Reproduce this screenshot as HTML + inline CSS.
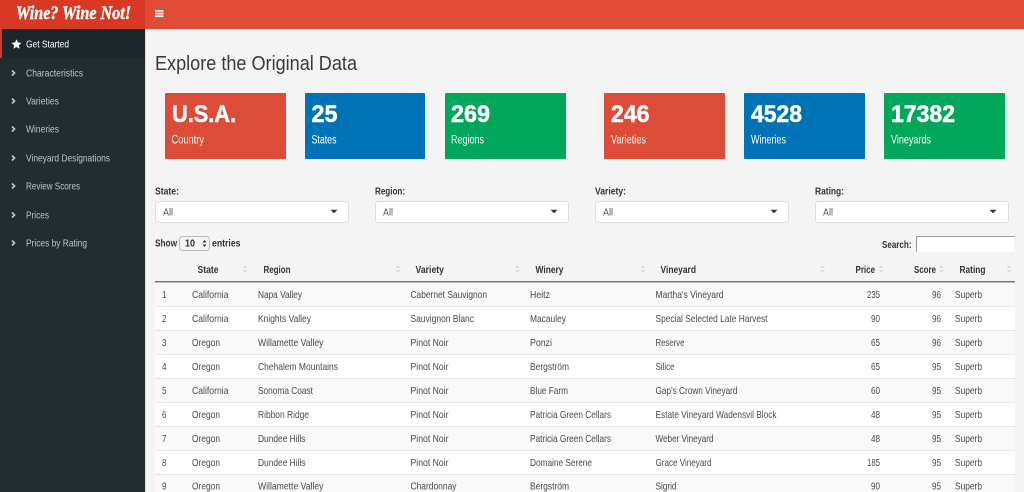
<!DOCTYPE html>
<html><head><meta charset="utf-8"><title>Wine? Wine Not!</title>
<style>
html,body{margin:0;padding:0;width:1024px;height:492px;overflow:hidden;background:#f4f4f4}
svg{display:block;font-family:"Liberation Sans",sans-serif;filter:blur(.3px)}
.n{font-size:10.5px;fill:#b8c7ce}
.b{font-size:10.5px;font-weight:bold;fill:#333}
.c{font-size:10.5px;fill:#484848}
.r{font-size:10.5px;fill:#484848;text-anchor:end}
.v{font-size:24px;font-weight:bold;fill:#fff;stroke:#fff;stroke-width:.5px}
.l{font-size:11.5px;fill:#fff}
.a{font-size:10.5px;fill:#555}
</style></head><body>
<svg width="1024" height="492" viewBox="0 0 1024 492" xmlns="http://www.w3.org/2000/svg">
<defs>
<g id="s"><path d="M-2.5 -1L0 -4L2.5 -1Z M-2.5 1L0 4L2.5 1Z" fill="#ddd"/></g>
<path id="ch" d="M-1.5 -2.5L1 0L-1.5 2.5" fill="none" stroke="#b8c7ce" stroke-width="1.7"/>
<path id="car" d="M-3.5 -1.7H3.5L0 1.9Z" fill="#333"/>
</defs>
<rect width="1024" height="492" fill="#f4f4f4"/>
<rect x="145" y="0" width="879" height="29" fill="#e04c38"/>
<rect x="0" y="0" width="145" height="29" fill="#d73925"/>
<text x="16" y="19" textLength="115" lengthAdjust="spacingAndGlyphs" font-family="Liberation Serif" font-size="19" font-weight="bold" font-style="italic" fill="#fff" stroke="#fff" stroke-width=".45">Wine? Wine Not!</text>
<rect x="155" y="10" width="8.5" height="1.7" fill="#fff"/><rect x="155" y="12.7" width="8.5" height="1.7" fill="#fff"/><rect x="155" y="15.4" width="8.5" height="1.7" fill="#fff"/>
<rect x="0" y="29" width="145" height="463" fill="#222d32"/>
<rect x="145" y="29" width="1" height="463" fill="#d8d8d8"/>
<rect x="0" y="29" width="145" height="29" fill="#1e282c"/>
<rect x="0" y="29" width="2" height="29" fill="#d73925"/>
<path d="M16.5 39.2L18 42.5L21.5 42.9L18.9 45.2L19.6 48.7L16.5 47L13.4 48.7L14.1 45.2L11.5 42.9L15 42.5Z" fill="#fff"/>
<text class="n" style="fill:#fff" x="26" y="47.5" textLength="43" lengthAdjust="spacingAndGlyphs">Get Started</text>
<use href="#ch" x="13.5" y="73"/><text class="n" x="26" y="76.5" textLength="57" lengthAdjust="spacingAndGlyphs">Characteristics</text>
<use href="#ch" x="13.5" y="101"/><text class="n" x="26" y="104.5" textLength="33" lengthAdjust="spacingAndGlyphs">Varieties</text>
<use href="#ch" x="13.5" y="129"/><text class="n" x="26" y="132.5" textLength="33" lengthAdjust="spacingAndGlyphs">Wineries</text>
<use href="#ch" x="13.5" y="158"/><text class="n" x="26" y="161.5" textLength="84" lengthAdjust="spacingAndGlyphs">Vineyard Designations</text>
<use href="#ch" x="13.5" y="186"/><text class="n" x="26" y="189.5" textLength="54" lengthAdjust="spacingAndGlyphs">Review Scores</text>
<use href="#ch" x="13.5" y="215"/><text class="n" x="26" y="218.5" textLength="23" lengthAdjust="spacingAndGlyphs">Prices</text>
<use href="#ch" x="13.5" y="243"/><text class="n" x="26" y="246.5" textLength="61" lengthAdjust="spacingAndGlyphs">Prices by Rating</text>

<text x="155" y="70" font-size="20" fill="#3a3a3a" textLength="202" lengthAdjust="spacingAndGlyphs">Explore the Original Data</text>

<rect x="165" y="93" width="121" height="66" rx="1" fill="#dd4b39"/>
<rect x="305" y="93" width="120" height="66" rx="1" fill="#0073b7"/>
<rect x="445" y="93" width="121" height="66" rx="1" fill="#00a65a"/>
<rect x="604" y="93" width="121" height="66" rx="1" fill="#dd4b39"/>
<rect x="744" y="93" width="121" height="66" rx="1" fill="#0073b7"/>
<rect x="884" y="93" width="121" height="66" rx="1" fill="#00a65a"/>
<text class="v" x="172" y="122" textLength="64" lengthAdjust="spacingAndGlyphs">U.S.A.</text><text class="l" x="171.5" y="143.5" textLength="32.5" lengthAdjust="spacingAndGlyphs">Country</text>
<text class="v" x="311.5" y="122" textLength="26" lengthAdjust="spacingAndGlyphs">25</text><text class="l" x="311.5" y="143.5" textLength="25" lengthAdjust="spacingAndGlyphs">States</text>
<text class="v" x="451" y="122" textLength="39" lengthAdjust="spacingAndGlyphs">269</text><text class="l" x="451" y="143.5" textLength="33" lengthAdjust="spacingAndGlyphs">Regions</text>
<text class="v" x="611" y="122" textLength="38.5" lengthAdjust="spacingAndGlyphs">246</text><text class="l" x="611" y="143.5" textLength="35" lengthAdjust="spacingAndGlyphs">Varieties</text>
<text class="v" x="751" y="122" textLength="51" lengthAdjust="spacingAndGlyphs">4528</text><text class="l" x="751" y="143.5" textLength="35" lengthAdjust="spacingAndGlyphs">Wineries</text>
<text class="v" x="891" y="122" textLength="64" lengthAdjust="spacingAndGlyphs">17382</text><text class="l" x="891" y="143.5" textLength="40" lengthAdjust="spacingAndGlyphs">Vineyards</text>

<text class="b" x="155" y="194.5" textLength="24" lengthAdjust="spacingAndGlyphs">State:</text>
<text class="b" x="375" y="194.5" textLength="30" lengthAdjust="spacingAndGlyphs">Region:</text>
<text class="b" x="595" y="194.5" textLength="31" lengthAdjust="spacingAndGlyphs">Variety:</text>
<text class="b" x="815" y="194.5" textLength="29" lengthAdjust="spacingAndGlyphs">Rating:</text>
<g fill="#fff" stroke="#ddd">
<rect x="155.5" y="201.5" width="193" height="21" rx="2"/>
<rect x="375.5" y="201.5" width="193" height="21" rx="2"/>
<rect x="595.5" y="201.5" width="193" height="21" rx="2"/>
<rect x="815.5" y="201.5" width="193" height="21" rx="2"/>
</g>
<text class="a" x="163" y="215.5" textLength="10" lengthAdjust="spacingAndGlyphs">All</text><use href="#car" x="334" y="211.5"/>
<text class="a" x="383" y="215.5" textLength="10" lengthAdjust="spacingAndGlyphs">All</text><use href="#car" x="554" y="211.5"/>
<text class="a" x="603" y="215.5" textLength="10" lengthAdjust="spacingAndGlyphs">All</text><use href="#car" x="774" y="211.5"/>
<text class="a" x="823" y="215.5" textLength="10" lengthAdjust="spacingAndGlyphs">All</text><use href="#car" x="993" y="211.5"/>

<text class="b" x="155" y="246.5" textLength="22" lengthAdjust="spacingAndGlyphs">Show</text>
<rect x="179.5" y="236.5" width="30" height="14" rx="3" fill="#f4f4f4" stroke="#bbb"/>
<text class="b" x="185" y="246.5" textLength="10" lengthAdjust="spacingAndGlyphs">10</text>
<path d="M202.5 242.5L204.5 240L206.5 242.5Z M202.5 244.5L204.5 247L206.5 244.5Z" fill="#333"/>
<text class="b" x="212" y="246.5" textLength="28.5" lengthAdjust="spacingAndGlyphs">entries</text>
<text class="b" x="882" y="248" textLength="29.5" lengthAdjust="spacingAndGlyphs">Search:</text>
<rect x="916" y="236" width="98" height="16" fill="#fff"/>
<path d="M916.5 252V236.5H1014.5" fill="none" stroke="#999"/>

<text class="b" x="197.5" y="273" textLength="21" lengthAdjust="spacingAndGlyphs">State</text><use href="#s" x="245" y="269"/>
<text class="b" x="263.5" y="273" textLength="27" lengthAdjust="spacingAndGlyphs">Region</text><use href="#s" x="398" y="269"/>
<text class="b" x="415.5" y="273" textLength="28.5" lengthAdjust="spacingAndGlyphs">Variety</text><use href="#s" x="517.5" y="269"/>
<text class="b" x="535.5" y="273" textLength="28" lengthAdjust="spacingAndGlyphs">Winery</text><use href="#s" x="643" y="269"/>
<text class="b" x="660.5" y="273" textLength="35.5" lengthAdjust="spacingAndGlyphs">Vineyard</text><use href="#s" x="822.5" y="269"/>
<text class="b" x="855.5" y="273" textLength="19.5" lengthAdjust="spacingAndGlyphs">Price</text><use href="#s" x="881" y="269"/>
<text class="b" x="914" y="273" textLength="22" lengthAdjust="spacingAndGlyphs">Score</text><use href="#s" x="941.5" y="269"/>
<text class="b" x="959.5" y="273" textLength="26" lengthAdjust="spacingAndGlyphs">Rating</text><use href="#s" x="1009" y="269"/>

<rect x="155" y="281" width="860" height="211" fill="#fff"/>
<g fill="#f9f9f9">
<rect x="155" y="283" width="860" height="23"/><rect x="155" y="331" width="860" height="23"/><rect x="155" y="379" width="860" height="23"/><rect x="155" y="427" width="860" height="23"/><rect x="155" y="475" width="860" height="17"/>
</g>
<g fill="#e6e6e6">
<rect x="155" y="306" width="860" height="1"/><rect x="155" y="330" width="860" height="1"/><rect x="155" y="354" width="860" height="1"/><rect x="155" y="378" width="860" height="1"/><rect x="155" y="402" width="860" height="1"/><rect x="155" y="426" width="860" height="1"/><rect x="155" y="450" width="860" height="1"/><rect x="155" y="474" width="860" height="1"/>
</g>
<rect x="155" y="281" width="860" height="1.5" fill="#777"/>

<g>
<text class="c" x="162" y="298" textLength="4.5" lengthAdjust="spacingAndGlyphs">1</text><text class="c" x="192" y="298" textLength="36.5" lengthAdjust="spacingAndGlyphs">California</text><text class="c" x="258" y="298" textLength="44" lengthAdjust="spacingAndGlyphs">Napa Valley</text><text class="c" x="410.5" y="298" textLength="76.5" lengthAdjust="spacingAndGlyphs">Cabernet Sauvignon</text><text class="c" x="530" y="298" textLength="20" lengthAdjust="spacingAndGlyphs">Heitz</text><text class="c" x="655.5" y="298" textLength="68" lengthAdjust="spacingAndGlyphs">Martha's Vineyard</text><text class="c" x="867" y="298" textLength="13" lengthAdjust="spacingAndGlyphs">235</text><text class="c" x="932" y="298" textLength="9" lengthAdjust="spacingAndGlyphs">96</text><text class="c" x="955" y="298" textLength="27" lengthAdjust="spacingAndGlyphs">Superb</text>

<text class="c" x="162" y="322" textLength="4.5" lengthAdjust="spacingAndGlyphs">2</text><text class="c" x="192" y="322" textLength="36.5" lengthAdjust="spacingAndGlyphs">California</text><text class="c" x="258" y="322" textLength="53" lengthAdjust="spacingAndGlyphs">Knights Valley</text><text class="c" x="410.5" y="322" textLength="63.5" lengthAdjust="spacingAndGlyphs">Sauvignon Blanc</text><text class="c" x="530" y="322" textLength="36" lengthAdjust="spacingAndGlyphs">Macauley</text><text class="c" x="655.5" y="322" textLength="112" lengthAdjust="spacingAndGlyphs">Special Selected Late Harvest</text><text class="c" x="871" y="322" textLength="9" lengthAdjust="spacingAndGlyphs">90</text><text class="c" x="932" y="322" textLength="9" lengthAdjust="spacingAndGlyphs">96</text><text class="c" x="955" y="322" textLength="27" lengthAdjust="spacingAndGlyphs">Superb</text>

<text class="c" x="162" y="346" textLength="4.5" lengthAdjust="spacingAndGlyphs">3</text><text class="c" x="192" y="346" textLength="28" lengthAdjust="spacingAndGlyphs">Oregon</text><text class="c" x="258" y="346" textLength="65.5" lengthAdjust="spacingAndGlyphs">Willamette Valley</text><text class="c" x="410.5" y="346" textLength="38" lengthAdjust="spacingAndGlyphs">Pinot Noir</text><text class="c" x="530" y="346" textLength="22" lengthAdjust="spacingAndGlyphs">Ponzi</text><text class="c" x="655.5" y="346" textLength="29" lengthAdjust="spacingAndGlyphs">Reserve</text><text class="c" x="871" y="346" textLength="9" lengthAdjust="spacingAndGlyphs">65</text><text class="c" x="932" y="346" textLength="9" lengthAdjust="spacingAndGlyphs">96</text><text class="c" x="955" y="346" textLength="27" lengthAdjust="spacingAndGlyphs">Superb</text>

<text class="c" x="162" y="370" textLength="4.5" lengthAdjust="spacingAndGlyphs">4</text><text class="c" x="192" y="370" textLength="28" lengthAdjust="spacingAndGlyphs">Oregon</text><text class="c" x="258" y="370" textLength="80" lengthAdjust="spacingAndGlyphs">Chehalem Mountains</text><text class="c" x="410.5" y="370" textLength="38" lengthAdjust="spacingAndGlyphs">Pinot Noir</text><text class="c" x="530" y="370" textLength="39" lengthAdjust="spacingAndGlyphs">Bergström</text><text class="c" x="655.5" y="370" textLength="19" lengthAdjust="spacingAndGlyphs">Silice</text><text class="c" x="871" y="370" textLength="9" lengthAdjust="spacingAndGlyphs">65</text><text class="c" x="932" y="370" textLength="9" lengthAdjust="spacingAndGlyphs">95</text><text class="c" x="955" y="370" textLength="27" lengthAdjust="spacingAndGlyphs">Superb</text>

<text class="c" x="162" y="394" textLength="4.5" lengthAdjust="spacingAndGlyphs">5</text><text class="c" x="192" y="394" textLength="36.5" lengthAdjust="spacingAndGlyphs">California</text><text class="c" x="258" y="394" textLength="55" lengthAdjust="spacingAndGlyphs">Sonoma Coast</text><text class="c" x="410.5" y="394" textLength="38" lengthAdjust="spacingAndGlyphs">Pinot Noir</text><text class="c" x="530" y="394" textLength="38" lengthAdjust="spacingAndGlyphs">Blue Farm</text><text class="c" x="655.5" y="394" textLength="82" lengthAdjust="spacingAndGlyphs">Gap's Crown Vineyard</text><text class="c" x="871" y="394" textLength="9" lengthAdjust="spacingAndGlyphs">60</text><text class="c" x="932" y="394" textLength="9" lengthAdjust="spacingAndGlyphs">95</text><text class="c" x="955" y="394" textLength="27" lengthAdjust="spacingAndGlyphs">Superb</text>

<text class="c" x="162" y="418" textLength="4.5" lengthAdjust="spacingAndGlyphs">6</text><text class="c" x="192" y="418" textLength="28" lengthAdjust="spacingAndGlyphs">Oregon</text><text class="c" x="258" y="418" textLength="51" lengthAdjust="spacingAndGlyphs">Ribbon Ridge</text><text class="c" x="410.5" y="418" textLength="38" lengthAdjust="spacingAndGlyphs">Pinot Noir</text><text class="c" x="530" y="418" textLength="81" lengthAdjust="spacingAndGlyphs">Patricia Green Cellars</text><text class="c" x="655.5" y="418" textLength="121" lengthAdjust="spacingAndGlyphs">Estate Vineyard Wadensvil Block</text><text class="c" x="871" y="418" textLength="9" lengthAdjust="spacingAndGlyphs">48</text><text class="c" x="932" y="418" textLength="9" lengthAdjust="spacingAndGlyphs">95</text><text class="c" x="955" y="418" textLength="27" lengthAdjust="spacingAndGlyphs">Superb</text>

<text class="c" x="162" y="442" textLength="4.5" lengthAdjust="spacingAndGlyphs">7</text><text class="c" x="192" y="442" textLength="28" lengthAdjust="spacingAndGlyphs">Oregon</text><text class="c" x="258" y="442" textLength="47.5" lengthAdjust="spacingAndGlyphs">Dundee Hills</text><text class="c" x="410.5" y="442" textLength="38" lengthAdjust="spacingAndGlyphs">Pinot Noir</text><text class="c" x="530" y="442" textLength="81" lengthAdjust="spacingAndGlyphs">Patricia Green Cellars</text><text class="c" x="655.5" y="442" textLength="58" lengthAdjust="spacingAndGlyphs">Weber Vineyard</text><text class="c" x="871" y="442" textLength="9" lengthAdjust="spacingAndGlyphs">48</text><text class="c" x="932" y="442" textLength="9" lengthAdjust="spacingAndGlyphs">95</text><text class="c" x="955" y="442" textLength="27" lengthAdjust="spacingAndGlyphs">Superb</text>

<text class="c" x="162" y="466" textLength="4.5" lengthAdjust="spacingAndGlyphs">8</text><text class="c" x="192" y="466" textLength="28" lengthAdjust="spacingAndGlyphs">Oregon</text><text class="c" x="258" y="466" textLength="47.5" lengthAdjust="spacingAndGlyphs">Dundee Hills</text><text class="c" x="410.5" y="466" textLength="38" lengthAdjust="spacingAndGlyphs">Pinot Noir</text><text class="c" x="530" y="466" textLength="62" lengthAdjust="spacingAndGlyphs">Domaine Serene</text><text class="c" x="655.5" y="466" textLength="56" lengthAdjust="spacingAndGlyphs">Grace Vineyard</text><text class="c" x="867" y="466" textLength="13" lengthAdjust="spacingAndGlyphs">185</text><text class="c" x="932" y="466" textLength="9" lengthAdjust="spacingAndGlyphs">95</text><text class="c" x="955" y="466" textLength="27" lengthAdjust="spacingAndGlyphs">Superb</text>

<text class="c" x="162" y="489.5" textLength="4.5" lengthAdjust="spacingAndGlyphs">9</text><text class="c" x="192" y="489.5" textLength="28" lengthAdjust="spacingAndGlyphs">Oregon</text><text class="c" x="258" y="489.5" textLength="65.5" lengthAdjust="spacingAndGlyphs">Willamette Valley</text><text class="c" x="410.5" y="489.5" textLength="46" lengthAdjust="spacingAndGlyphs">Chardonnay</text><text class="c" x="530" y="489.5" textLength="39" lengthAdjust="spacingAndGlyphs">Bergström</text><text class="c" x="655.5" y="489.5" textLength="21" lengthAdjust="spacingAndGlyphs">Sigrid</text><text class="c" x="871" y="489.5" textLength="9" lengthAdjust="spacingAndGlyphs">90</text><text class="c" x="932" y="489.5" textLength="9" lengthAdjust="spacingAndGlyphs">95</text><text class="c" x="955" y="489.5" textLength="27" lengthAdjust="spacingAndGlyphs">Superb</text>
</g>
</svg>
</body></html>
